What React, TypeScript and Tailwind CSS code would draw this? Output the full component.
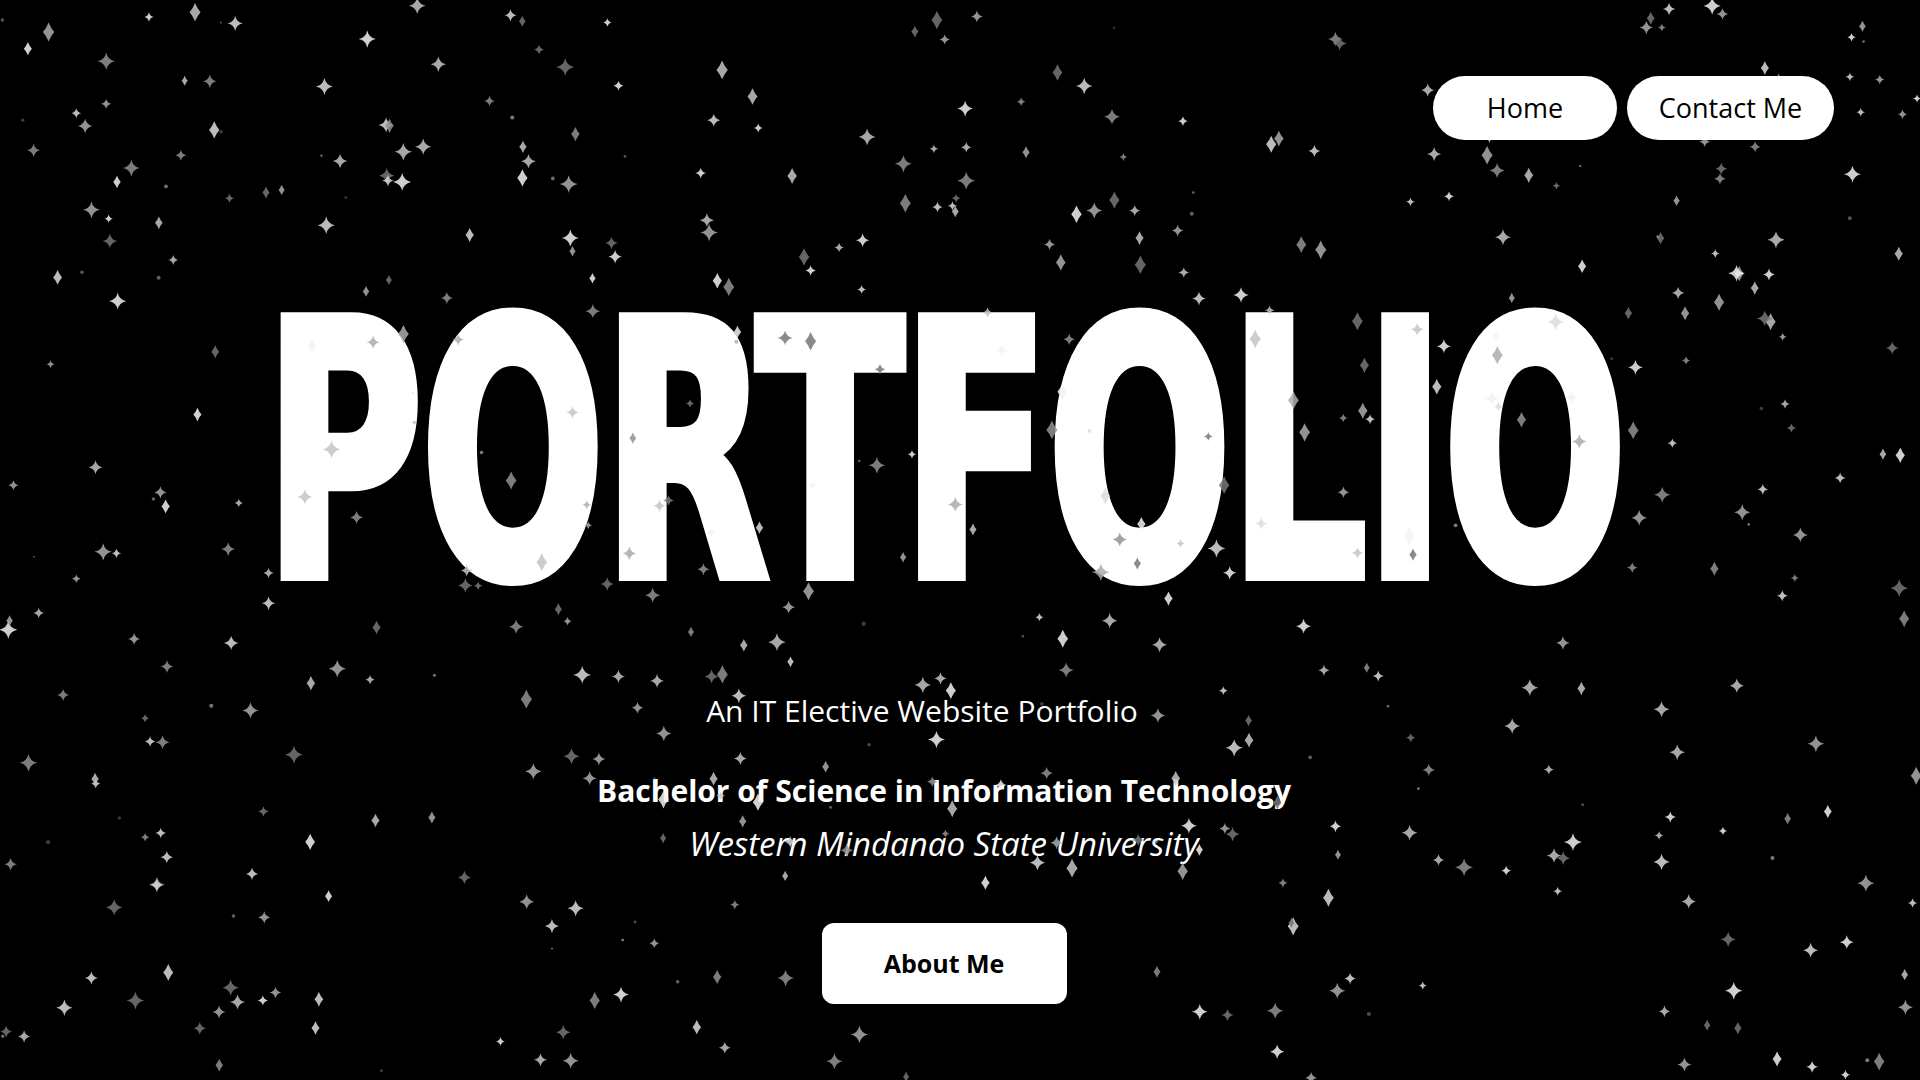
import React from "react";

type Star = { x: number; y: number; s: number; kind: number; fill: string };

const rng = (seed: number) => {
  let a = seed;
  return () => {
    a |= 0;
    a = (a + 0x6d2b79f5) | 0;
    let t = Math.imul(a ^ (a >>> 15), 1 | a);
    t = (t + Math.imul(t ^ (t >>> 7), 61 | t)) ^ t;
    return ((t ^ (t >>> 14)) >>> 0) / 4294967296;
  };
};

const makeStars = (): Star[] => {
  const r = rng(2024);
  const out: Star[] = [];
  const shades = ["#777777", "#929292", "#acacac", "#c4c4c4", "#dcdcdc", "#f2f2f2"];
  for (let i = 0; i < 540; i++) {
    const kind = r() < 0.6 ? 0 : r() < 0.72 ? 1 : 2;
    out.push({
      x: r() * 1920,
      y: r() * 1080,
      s: kind === 2 ? 1 + r() * 1.2 : kind === 1 ? 5 + r() * 4.5 : 4 + r() * 5,
      kind,
      fill: shades[Math.floor(r() * shades.length)],
    });
  }
  return out;
};

const stars = makeStars();

// thin four pointed sparkle
const sparkle = (x: number, y: number, s: number) => {
  const k = s * 0.17;
  return `M${x},${y - s} Q${x + k},${y - k} ${x + s},${y} Q${x + k},${y + k} ${x},${y + s} Q${x - k},${y + k} ${x - s},${y} Q${x - k},${y - k} ${x},${y - s}Z`;
};

// tall diamond
const diamond = (x: number, y: number, s: number) => {
  const w = s * 0.6;
  const h = s;
  return `M${x},${y - h} Q${x + w * 0.4},${y - h * 0.4} ${x + w},${y} Q${x + w * 0.4},${y + h * 0.4} ${x},${y + h} Q${x - w * 0.4},${y + h * 0.4} ${x - w},${y} Q${x - w * 0.4},${y - h * 0.4} ${x},${y - h}Z`;
};

const StarField = () => (
  <svg
    className="absolute inset-0 pointer-events-none"
    width="1920"
    height="1080"
    viewBox="0 0 1920 1080"
  >
    {stars.map((st, i) =>
      st.kind === 2 ? (
        <circle key={i} cx={st.x} cy={st.y} r={st.s} fill={st.fill} opacity={0.5} />
      ) : (
        <path
          key={i}
          d={st.kind === 0 ? sparkle(st.x, st.y, st.s) : diamond(st.x, st.y, st.s)}
          fill={st.fill}
          opacity={0.85}
        />
      )
    )}
  </svg>
);

const NavButton = ({ label, w }: { label: string; w: string }) => (
  <button
    className={`${w} h-[64px] rounded-full bg-white text-black text-[27px] font-['Open_Sans',sans-serif] flex items-center justify-center`}
  >
    {label}
  </button>
);

export default function App() {
  return (
    <div className="relative w-full h-screen bg-black overflow-hidden font-['Open_Sans',sans-serif] text-white">
      <header className="relative z-10 flex justify-end gap-[10px] pt-[76px] pr-[86px]">
        <NavButton label="Home" w="w-[184px]" />
        <NavButton label="Contact Me" w="w-[207px]" />
      </header>

      <main className="relative flex flex-col items-center pr-[32px]">
        <h1 className="mt-[168px] h-[290px] flex items-center font-['Liberation_Sans_Narrow','DejaVu_Sans_Condensed',sans-serif] font-bold text-[355px] leading-none tracking-[-4px] scale-x-[0.68] [-webkit-text-stroke:10px_white]">
          PORTFOLIO
        </h1>

        <p className="mt-[98px] mr-[44px] text-[30px] leading-none">An IT Elective Website Portfolio</p>
        <p className="mt-[50px] text-[30px] font-bold leading-none">
          Bachelor of Science in Information Technology
        </p>
        <p className="mt-[21px] text-[33px] italic leading-none">Western Mindanao State University</p>

        <button className="relative z-10 mt-[63px] w-[245px] h-[81px] rounded-[12px] bg-white text-black text-[25px] font-bold">
          About Me
        </button>
      </main>

      <StarField />
    </div>
  );
}
